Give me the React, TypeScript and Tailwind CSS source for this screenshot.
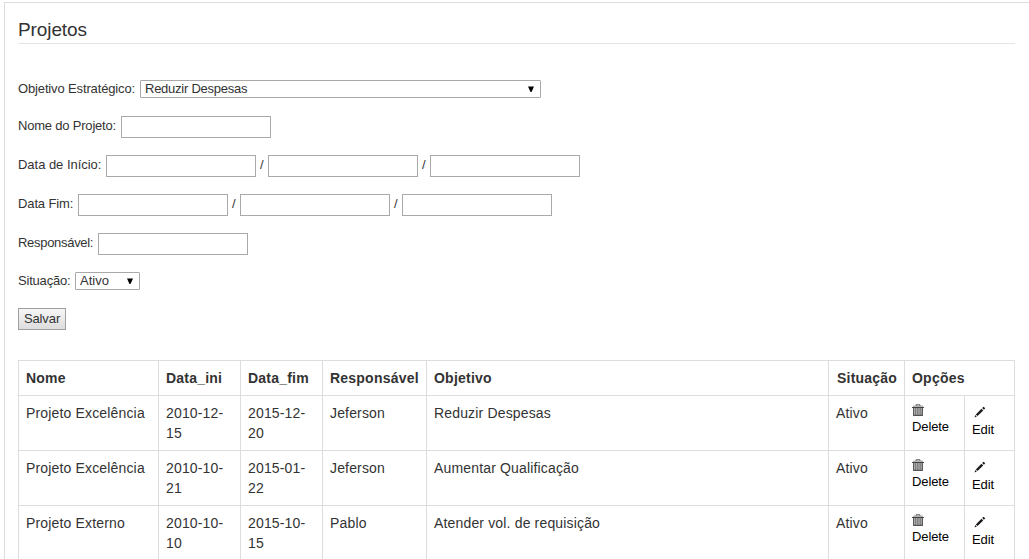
import React from "react";

const projects = [
  ["Projeto Excelência", "2010-12-15", "2015-12-20", "Jeferson", "Reduzir Despesas", "Ativo"],
  ["Projeto Excelência", "2010-10-21", "2015-01-22", "Jeferson", "Aumentar Qualificação", "Ativo"],
  ["Projeto Externo", "2010-10-10", "2015-10-15", "Pablo", "Atender vol. de requisição", "Ativo"],
];

function Field({ label, width, children }: { label: string; width: string; children: React.ReactNode }) {
  return (
    <div className="flex items-start">
      <span className={`${width} shrink-0 whitespace-nowrap`}>{label}</span>
      {children}
    </div>
  );
}

function TextInput() {
  return <input type="text" className="h-[22px] w-[150px] shrink-0 border border-[#a9a9a9] bg-white px-1 outline-none" />;
}

function Slash() {
  return <span className="w-3 shrink-0 pl-1 leading-5">/</span>;
}

function SelectBox({ value, width }: { value: string; width: string }) {
  return (
    <div className={`${width} flex h-[18px] items-center justify-between rounded-[1px] border border-[#a9a9a9] bg-white pr-[5px] pl-1`}>
      <span className="leading-4">{value}</span>
      <svg width="8" height="7" viewBox="0 0 8 7">
        <path d="M1 .5h6L4.5 6h-1z" fill="#000" />
      </svg>
    </div>
  );
}

function TrashIcon() {
  return (
    <svg className="block" width="12" height="12" viewBox="0 0 12 12" fill="none">
      <path d="M4 1.8V.8h4v1" stroke="#555" />
      <path d="M1 2.2h10" stroke="#777" strokeWidth=".8" />
      <path d="M0 3.5h12" stroke="#444" />
      <path d="M1.5 4h9v7.4h-9z" fill="#bbb" />
      <path d="M1.6 4v7.4h8.8V4" stroke="#555" strokeWidth="1.1" />
      <path d="M3.6 4v7M5.3 4v7M7 4v7M8.7 4v7" stroke="#666" strokeWidth=".8" />
    </svg>
  );
}

function PencilIcon() {
  return (
    <svg className="block" width="12" height="12" viewBox="0 0 12 12" fill="#1a1a1a">
      <path d="M.5 11.4 1.3 9 2.8 10.6z" />
      <path d="M1.8 8.4 7.5 2.7 9.2 4.4 3.5 10.1z" />
      <path d="M8.2 2.1 9.6.8 11.2 2.3 9.9 3.7z" />
    </svg>
  );
}

export default function App() {
  const head = "border-t border-l border-[#dddddd] px-[7px] pt-[7px] text-left align-top font-bold leading-5 tracking-[0.22px] whitespace-nowrap";
  const cell = "border-t border-l border-[#dddddd] px-[7px] pt-[7px] align-top leading-5";
  return (
    <div className="h-[559px] w-[1029px] overflow-hidden bg-white pt-[2px] pl-1 font-['Liberation_Sans',Arial,sans-serif] text-[13px] text-[#333333]">
      <div className="h-[600px] w-[1040px] border border-[#dddddd] pl-[13px]">
        <h1 className="mt-[13px] h-[28px] w-[997px] border-b border-[#e5e5e5] text-[19px] leading-[27px] tracking-[-0.1px]">Projetos</h1>
        <form className="mt-9">
          <div className="mb-[18px]">
            <Field label="Objetivo Estratégico:" width="w-[122px] leading-[18px] tracking-[-0.14px]">
              <SelectBox value="Reduzir Despesas" width="w-[401px] tracking-[-0.25px]" />
            </Field>
          </div>
          <div className="flex flex-col gap-[17px]">
            <Field label="Nome do Projeto:" width="w-[103px] leading-5 tracking-[-0.2px]">
              <TextInput />
            </Field>
            <Field label="Data de Início:" width="w-[88px] leading-5 tracking-[-0.03px]">
              <TextInput />
              <Slash />
              <TextInput />
              <Slash />
              <TextInput />
            </Field>
            <Field label="Data Fim:" width="w-[60px] leading-5 tracking-[-0.12px]">
              <TextInput />
              <Slash />
              <TextInput />
              <Slash />
              <TextInput />
            </Field>
            <Field label="Responsável:" width="w-[80px] leading-5 tracking-[-0.3px]">
              <TextInput />
            </Field>
            <Field label="Situação:" width="w-[57px] leading-[18px] tracking-[-0.2px]">
              <SelectBox value="Ativo" width="w-[65px] tracking-normal" />
            </Field>
          </div>
          <button type="button" className="mt-[18px] block h-[22px] w-[48px] border border-[#a0a0a0] bg-linear-to-b from-[#f6f6f6] to-[#dddddd] text-center leading-5 tracking-[-0.1px]">
            Salvar
          </button>
        </form>
        <table className="mt-[30px] w-[997px] table-fixed border-separate border-spacing-0 border-r border-b border-[#dddddd] text-[14px]">
          <colgroup>
            <col className="w-[140px]" />
            <col className="w-[82px]" />
            <col className="w-[82px]" />
            <col className="w-[104px]" />
            <col className="w-[402px]" />
            <col className="w-[76px]" />
            <col className="w-[60px]" />
            <col className="w-[50px]" />
          </colgroup>
          <thead>
            <tr className="h-[35px]">
              <th className={head}>Nome</th>
              <th className={head}>Data_ini</th>
              <th className={head}>Data_fim</th>
              <th className={head}>Responsável</th>
              <th className={head}>Objetivo</th>
              <th className={head}><span className="pl-px">Situação</span></th>
              <th className={head} colSpan={2}>Opções</th>
            </tr>
          </thead>
          <tbody>
            {projects.map((project, index) => (
              <tr key={index} className="h-[55px]">
                {project.map((value, column) => (
                  <td key={column} className={`${cell} tracking-[0.16px]`}>{value}</td>
                ))}
                <td className={cell}>
                  <a className="block pt-[1px] text-[13px] leading-[18px] tracking-[-0.1px] text-black">
                    <TrashIcon />
                    <span className="block pt-[2px]">Delete</span>
                  </a>
                </td>
                <td className={cell}>
                  <a className="block pt-[3px] text-[13px] leading-[20px] tracking-[-0.1px] text-black">
                    <span className="block pl-[2px]"><PencilIcon /></span>
                    <span className="block pt-[2px]">Edit</span>
                  </a>
                </td>
              </tr>
            ))}
          </tbody>
        </table>
      </div>
    </div>
  );
}
